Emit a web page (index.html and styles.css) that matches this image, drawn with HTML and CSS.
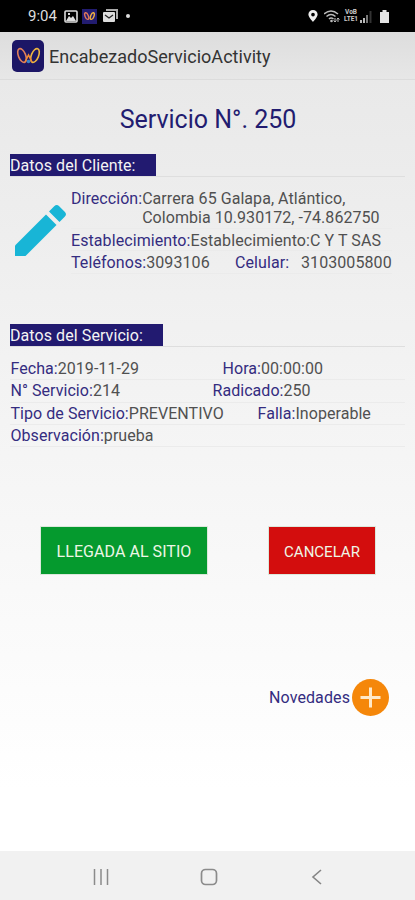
FILE: index.html
```html
<!DOCTYPE html>
<html lang="es">

<head>
    <meta charset="UTF-8">
    <meta name="viewport" content="width=device-width, initial-scale=1.0">
    <title>EncabezadoServicioActivity</title>
    <link rel="stylesheet" href="styles.css">
</head>

<body>
    <!-- barra de estado -->
    <div class="status">
        <span class="time">9:04</span>
        <svg class="ic-image" width="14" height="13" viewBox="0 0 14 13">
            <rect x="1" y="1" width="12" height="11" rx="1" fill="none" stroke="#ddd" stroke-width="1.6" />
            <path d="M2 11l3-5 2 2 2-2 3 5z" fill="#ddd" />
            <rect x="4" y="3" width="2" height="2" fill="#ddd" />
        </svg>
        <svg class="ic-app" width="15" height="15" viewBox="0 0 32 32">
            <rect width="32" height="32" fill="#221c70" />
            <g fill="none" stroke-width="3">
                <ellipse cx="10" cy="15" rx="3.500" ry="7.500" transform="rotate(-22 10 15)" stroke="#e0785a" />
                <ellipse cx="22" cy="15" rx="3.500" ry="7.500" transform="rotate(22 22 15)" stroke="#f0b040" />
            </g>
        </svg>
        <svg class="ic-mail" width="15" height="14" viewBox="0 0 15 14">
            <path d="M3 1h11v9" fill="none" stroke="#aaa" stroke-width="2" />
            <rect y="3" width="12" height="10" rx="1" fill="#ddd" />
            <path d="M2 6l4 3 4-3" fill="none" stroke="#222" stroke-width="1.3" />
        </svg>
        <span class="dot"></span>
        <div class="signals">
            <svg width="10" height="12" viewBox="0 0 10 13">
                <path fill="#eee" fill-rule="evenodd" d="M5 0a5 5 0 0 0-5 5c0 3 5 8 5 8s5-5 5-8a5 5 0 0 0-5-5zm0 3a2 2 0 1 1 0 4 2 2 0 0 1 0-4z" />
            </svg>
            <svg class="ic-wifi" width="16" height="13" viewBox="0 0 16 13">
                <g fill="none" stroke="#bbb" stroke-width="1.5">
                    <path d="M0 4q7-6 14 0M2.500 6.500q4.500-4 9 0M5 9q2-2 4.500 0" />
                    <path d="M11 8v4M9.500 10.500L11 12l1.500-1.500M14 12V8M12.800 9.500L14 8l1.500 1.500" stroke-width="1" />
                </g>
                <circle cx="7.500" cy="11" r="1.300" fill="#bbb" />
            </svg>
            <div class="volte"><span>VoB</span><span>LTE1</span></div>
            <svg class="ic-bars" width="12" height="13" viewBox="0 0 12 13">
                <path d="M0 10h2v3H0zM3 8h2v5H3z" fill="#bbb" />
                <path d="M6 5h2v8H6z" fill="#777" />
                <path d="M9.500 1h2v12h-2z" fill="#333" />
            </svg>
            <svg class="ic-battery" width="9" height="13" viewBox="0 0 9 13">
                <path d="M2.500 0h4v2H9v11H0V2h2.500z" fill="#e4e4e4" />
            </svg>
        </div>
    </div>

    <!-- encabezado -->
    <div class="header">
        <svg width="32" height="32" viewBox="0 0 32 32">
            <rect width="32" height="32" rx="5" fill="#1c1666" />
            <g fill="none" stroke-width="1.600">
                <ellipse cx="10" cy="15.500" rx="3.600" ry="7.300" transform="rotate(-22 10 15.500)" stroke="#e0805a" />
                <ellipse cx="23" cy="15.500" rx="3.600" ry="7.300" transform="rotate(22 23 15.500)" stroke="#efb640" />
                <path d="M13 22l3.500-7 3.500 7" stroke="#f08a35" />
            </g>
            <circle cx="16.500" cy="21.500" r="1.800" fill="#3b83c8" />
        </svg>
        <span class="name">EncabezadoServicioActivity</span>
    </div>

    <div class="content">
        <h1>Servicio N°. 250</h1>

        <div class="section">
            <h2 class="client-title">Datos del Cliente:</h2>
        </div>
        <div class="client">
            <svg class="pencil" width="51" height="51" viewBox="0 0 51 51" fill="#18b5d6">
                <path d="M0 51V40.500L31 9.500 41.500 20 10.500 51z" />
                <path d="M34 6.500l5.200-5.200a3.500 3.500 0 0 1 5 0l5.500 5.500a3.500 3.500 0 0 1 0 5L44.500 17z" />
            </svg>
            <div class="client-data">
                <div class="row address"><b>Dirección:</b><span>Carrera 65 Galapa, Atlántico,<br>Colombia 10.930172, -74.862750</span></div>
                <div class="row shop"><b>Establecimiento:</b><span>Establecimiento:C Y T SAS</span></div>
                <div class="row phones">
                    <div class="phone"><b>Teléfonos:</b><span>3093106</span></div>
                    <b class="cell">Celular:</b><span>3103005800</span>
                </div>
            </div>
        </div>

        <div class="section service-section">
            <h2 class="service-title">Datos del Servicio:</h2>
        </div>
        <div class="service">
            <div class="row">
                <div class="col-date"><b>Fecha:</b><span>2019-11-29</span></div>
                <div><b>Hora:</b><span>00:00:00</span></div>
            </div>
            <div class="row">
                <div class="col-number"><b>N° Servicio:</b><span>214</span></div>
                <div><b>Radicado:</b><span>250</span></div>
            </div>
            <div class="row">
                <div class="col-type"><b>Tipo de Servicio:</b><span>PREVENTIVO</span></div>
                <div class="fault"><b>Falla:</b><span>Inoperable</span></div>
            </div>
            <div class="row">
                <div><b>Observación:</b><span>prueba</span></div>
            </div>
        </div>

        <div class="buttons">
            <button class="arrive">LLEGADA AL SITIO</button>
            <button class="cancel">CANCELAR</button>
        </div>

        <div class="news">
            <span>Novedades</span>
            <svg width="37" height="37" viewBox="0 0 37 37">
                <circle cx="18.500" cy="18.500" r="18.500" fill="#f5870a" />
                <path d="M18.500 8.500v20M8.500 18.500h20" stroke="#ffe9c8" stroke-width="3" />
            </svg>
        </div>
    </div>

    <!-- botones del sistema -->
    <div class="nav">
        <svg width="16" height="16" viewBox="0 0 16 16">
            <path d="M1.500 0v16M8 0v16M14.500 0v16" stroke="#8b8b8b" stroke-width="1.500" />
        </svg>
        <svg width="18" height="18" viewBox="0 0 18 18">
            <rect x="1.500" y="1.500" width="15" height="15" rx="4" fill="none" stroke="#8b8b8b" stroke-width="1.700" />
        </svg>
        <svg width="16" height="16" viewBox="0 0 16 16">
            <path d="M12 1L4 8l8 7" fill="none" stroke="#858585" stroke-width="1.600" />
        </svg>
    </div>
</body>

</html>
```
FILE: styles.css
```css
* {
    box-sizing: border-box;
}

body {
    margin: 0;
    height: 900px;
    display: flex;
    flex-direction: column;
    overflow: hidden;
    font-family: Roboto, sans-serif;
    font-size: 16px;
    color: #505050;
    background: #fff;
}

svg {
    display: block;
    flex: none;
}

.status {
    height: 32px;
    padding: 0 26px 0 28px;
    display: flex;
    align-items: center;
    background: #000;
    color: #ddd;
}

.time {
    width: 36px;
    font-size: 15px;
    line-height: 34px;
}

.ic-app {
    margin-left: 4px;
}

.ic-mail {
    margin-left: 6px;
}

.dot {
    width: 4px;
    height: 4px;
    margin-left: 8px;
    border-radius: 50%;
    background: #ddd;
}

.signals {
    margin-left: auto;
    display: flex;
    align-items: center;
}

.ic-wifi {
    margin-left: 6px;
}

.volte {
    width: 16px;
    margin-left: 3px;
    font-size: 6.5px;
    line-height: 7px;
    font-weight: 700;
    text-align: center;
    color: #ccc;
}

.volte span {
    display: block;
}

.ic-bars {
    margin-left: 1px;
}

.ic-battery {
    margin-left: 8px;
}

.header {
    height: 48px;
    padding: 1px 12px 0;
    display: flex;
    align-items: center;
    gap: 5px;
    background: linear-gradient(#dddddd, #e7e7e7);
    border-bottom: 1px solid #dcdcdc;
}

.name {
    padding-top: 1px;
    font-size: 18px;
    letter-spacing: 0.03px;
    color: #333;
}

.content {
    height: 771px;
    padding: 0 10px;
    background: linear-gradient(#e9e9e9, #f3f3f3 40%, #fff 92%);
}

h1 {
    margin: 0;
    padding: 23px 0 0 1px;
    height: 74px;
    font-size: 25px;
    line-height: 34px;
    font-weight: 400;
    text-align: center;
    color: #221c70;
}

.section {
    border-bottom: 1px solid #dedede;
}

h2 {
    margin: 0;
    height: 22px;
    font-size: 16px;
    line-height: 23px;
    font-weight: 400;
    letter-spacing: 0.08px;
    color: #f4f4f4;
    background: #221a70;
}

.client-title {
    width: 146px;
}

.service-title {
    width: 153px;
}

b {
    font-weight: 400;
    color: #342c80;
}

.client {
    display: flex;
    height: 147px;
    padding-top: 13px;
}

.pencil {
    margin: 15px 5px 0;
}

.row {
    height: 22.3px;
    line-height: 22px;
    display: flex;
    white-space: nowrap;
    letter-spacing: 0.05px;
    border-bottom: 1px solid #ebebeb;
}

.address {
    height: 39px;
    line-height: 18.5px;
}

.shop,
.phones {
    line-height: 23px;
    letter-spacing: 0.08px;
}

.phone {
    width: 164px;
}

.cell {
    width: 66px;
}

.service {
    padding-top: 11px;
}

.service .row {
    padding-left: 0.5px;
}

.col-date {
    width: 212px;
}

.col-number {
    width: 202px;
}

.col-type {
    width: 247px;
}

.buttons {
    margin-top: 79px;
    padding: 0 29px 0 30px;
    display: flex;
    justify-content: space-between;
}

button {
    height: 49px;
    padding: 2px 0 0;
    border: 1px solid #dce8dc;
    font-family: inherit;
    font-size: 16px;
    color: #eef6e6;
}

.arrive {
    width: 168px;
    letter-spacing: 0.05px;
    background: #059a2e;
}

.cancel {
    width: 108px;
    font-size: 15px;
    background: #d30d0d;
}

.news {
    margin: 104px 16px 0 0;
    display: flex;
    align-items: center;
    justify-content: flex-end;
    gap: 2px;
    letter-spacing: 0.1px;
    color: #342c80;
}

.nav {
    height: 49px;
    padding: 3px 90px 0 93px;
    display: flex;
    align-items: center;
    justify-content: space-between;
    background: #f1f1f1;
}
```
